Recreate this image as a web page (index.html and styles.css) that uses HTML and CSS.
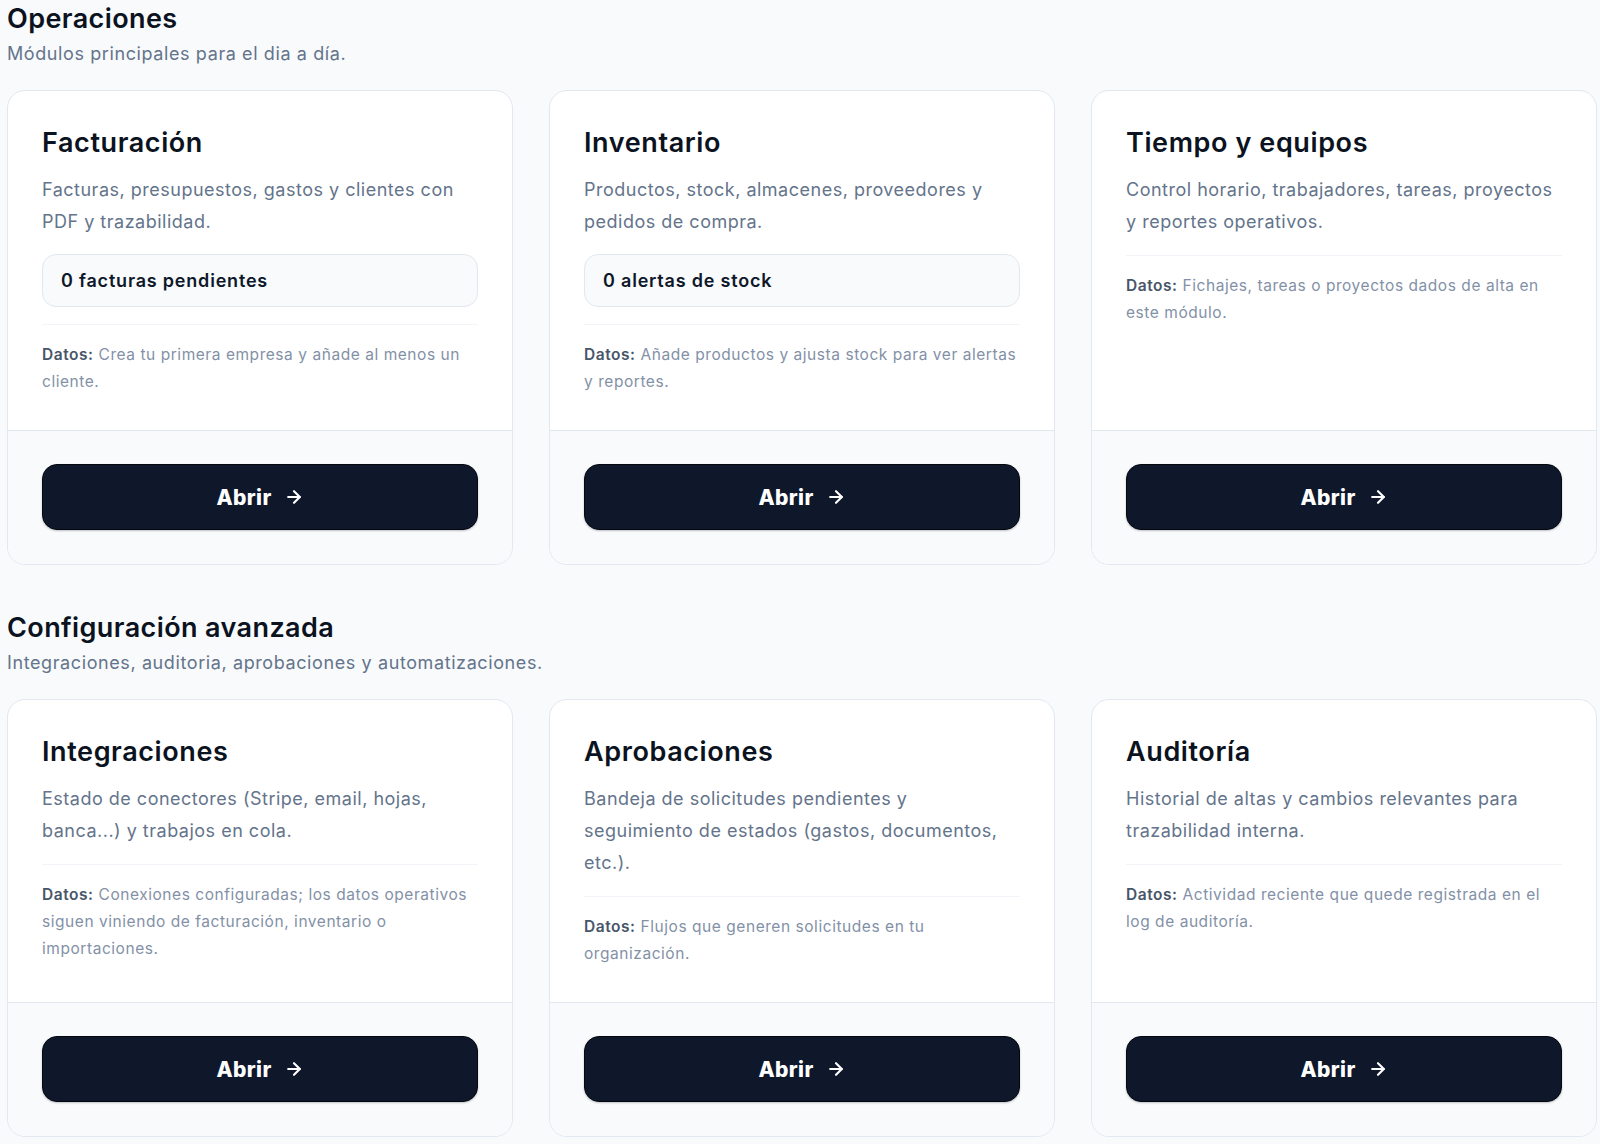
FILE: index.html
```html
<!DOCTYPE html>
<html lang="es">
<head>
<meta charset="utf-8">
<title>Módulos</title>
<link rel="stylesheet" href="styles.css">
</head>
<body>
<main class="page">
  <section class="section">
    <header class="section-head">
      <h2 class="section-title">Operaciones</h2>
      <p class="section-sub">Módulos principales para el dia a día.</p>
    </header>
    <div class="grid">
      <article class="card">
        <div class="card-body">
          <h3 class="card-title">Facturación</h3>
          <p class="card-desc">Facturas, presupuestos, gastos y clientes con PDF y trazabilidad.</p>
          <div class="stat">0 facturas pendientes</div>
          <p class="data"><strong>Datos:</strong> Crea tu primera empresa y añade al menos un cliente.</p>
        </div>
        <div class="card-foot">
          <button class="btn">Abrir <svg class="arrow" viewBox="0 0 24 24" fill="none" stroke="currentColor" stroke-width="2.6" stroke-linecap="round" stroke-linejoin="round"><path d="M5 12h14"/><path d="m12 5 7 7-7 7"/></svg></button>
        </div>
      </article>
      <article class="card">
        <div class="card-body">
          <h3 class="card-title">Inventario</h3>
          <p class="card-desc">Productos, stock, almacenes, proveedores y pedidos de compra.</p>
          <div class="stat">0 alertas de stock</div>
          <p class="data"><strong>Datos:</strong> Añade productos y ajusta stock para ver alertas y reportes.</p>
        </div>
        <div class="card-foot">
          <button class="btn">Abrir <svg class="arrow" viewBox="0 0 24 24" fill="none" stroke="currentColor" stroke-width="2.6" stroke-linecap="round" stroke-linejoin="round"><path d="M5 12h14"/><path d="m12 5 7 7-7 7"/></svg></button>
        </div>
      </article>
      <article class="card">
        <div class="card-body">
          <h3 class="card-title">Tiempo y equipos</h3>
          <p class="card-desc">Control horario, trabajadores, tareas, proyectos y reportes operativos.</p>
          <p class="data"><strong>Datos:</strong> Fichajes, tareas o proyectos dados de alta en este módulo.</p>
        </div>
        <div class="card-foot">
          <button class="btn">Abrir <svg class="arrow" viewBox="0 0 24 24" fill="none" stroke="currentColor" stroke-width="2.6" stroke-linecap="round" stroke-linejoin="round"><path d="M5 12h14"/><path d="m12 5 7 7-7 7"/></svg></button>
        </div>
      </article>
    </div>
  </section>

  <section class="section">
    <header class="section-head">
      <h2 class="section-title">Configuración avanzada</h2>
      <p class="section-sub">Integraciones, auditoria, aprobaciones y automatizaciones.</p>
    </header>
    <div class="grid">
      <article class="card">
        <div class="card-body">
          <h3 class="card-title">Integraciones</h3>
          <p class="card-desc">Estado de conectores (Stripe, email, hojas, banca...) y trabajos en cola.</p>
          <p class="data"><strong>Datos:</strong> Conexiones configuradas; los datos operativos siguen viniendo de facturación, inventario o importaciones.</p>
        </div>
        <div class="card-foot">
          <button class="btn">Abrir <svg class="arrow" viewBox="0 0 24 24" fill="none" stroke="currentColor" stroke-width="2.6" stroke-linecap="round" stroke-linejoin="round"><path d="M5 12h14"/><path d="m12 5 7 7-7 7"/></svg></button>
        </div>
      </article>
      <article class="card">
        <div class="card-body">
          <h3 class="card-title">Aprobaciones</h3>
          <p class="card-desc">Bandeja de solicitudes pendientes y seguimiento de estados (gastos, documentos, etc.).</p>
          <p class="data"><strong>Datos:</strong> Flujos que generen solicitudes en tu organización.</p>
        </div>
        <div class="card-foot">
          <button class="btn">Abrir <svg class="arrow" viewBox="0 0 24 24" fill="none" stroke="currentColor" stroke-width="2.6" stroke-linecap="round" stroke-linejoin="round"><path d="M5 12h14"/><path d="m12 5 7 7-7 7"/></svg></button>
        </div>
      </article>
      <article class="card">
        <div class="card-body">
          <h3 class="card-title">Auditoría</h3>
          <p class="card-desc">Historial de altas y cambios relevantes para trazabilidad interna.</p>
          <p class="data"><strong>Datos:</strong> Actividad reciente que quede registrada en el log de auditoría.</p>
        </div>
        <div class="card-foot">
          <button class="btn">Abrir <svg class="arrow" viewBox="0 0 24 24" fill="none" stroke="currentColor" stroke-width="2.6" stroke-linecap="round" stroke-linejoin="round"><path d="M5 12h14"/><path d="m12 5 7 7-7 7"/></svg></button>
        </div>
      </article>
    </div>
  </section>
</main>
</body>
</html>
```

FILE: styles.css
```css
* { box-sizing: border-box; }

html, body {
  margin: 0;
  padding: 0;
  background: #f8fafc;
}

body {
  font-family: Inter, "Noto Sans", "Liberation Sans", sans-serif;
  color: #0f172a;
}

.page {
  padding: 1px 3px 0 7px;
  display: flex;
  flex-direction: column;
  gap: 45px;
}

.section-head {
  display: flex;
  flex-direction: column;
  gap: 3px;
  margin-bottom: 22px;
}

.section-title {
  margin: 0;
  font-size: 27px;
  line-height: 36px;
  font-weight: 600;
  color: #0b1220;
  letter-spacing: 0.4px;
}

.section-sub {
  margin: 0;
  font-size: 18px;
  line-height: 28px;
  color: #64748b;
  letter-spacing: 0.6px;
}

.grid {
  display: grid;
  grid-template-columns: repeat(3, 1fr);
  gap: 36px;
}

.card {
  display: flex;
  flex-direction: column;
  background: #ffffff;
  border: 1px solid #e2e8f0;
  border-radius: 18px;
  overflow: hidden;
}

.card-body {
  flex: 1;
  padding: 34px 34px 35px;
  display: flex;
  flex-direction: column;
}

.card-title {
  margin: 0;
  font-size: 27px;
  line-height: 36px;
  font-weight: 600;
  color: #0b1220;
  letter-spacing: 0.6px;
}

.card-desc {
  margin: 13px 0 0;
  font-size: 18px;
  line-height: 32px;
  color: #64748b;
  letter-spacing: 0.5px;
}

.stat {
  margin-top: 16px;
  padding: 12px 18px;
  border: 1px solid #e2e8f0;
  border-radius: 14px;
  background: #f8fafc;
  font-size: 18px;
  line-height: 27px;
  font-weight: 600;
  color: #0f172a;
  letter-spacing: 0.8px;
}

.data {
  margin: 17px 0 0;
  padding-top: 16px;
  border-top: 1px solid #f1f5f9;
  font-size: 15.5px;
  line-height: 27px;
  color: #8391a7;
  letter-spacing: 0.55px;
}

.data strong {
  font-weight: 600;
  color: #475569;
}

.card-foot {
  border-top: 1px solid #e2e8f0;
  background: #f8fafc;
  padding: 33px 34px 34px;
}

.btn {
  width: 100%;
  height: 66px;
  display: flex;
  align-items: center;
  justify-content: center;
  gap: 12px;
  border: 1px solid #05080f;
  border-radius: 15px;
  background: #0f172a;
  color: #ffffff;
  font-family: Inter, "Noto Sans", "Liberation Sans", sans-serif;
  font-size: 21px;
  font-weight: 800;
  letter-spacing: 0.4px;
  box-shadow: 0 1px 2px rgba(15, 23, 42, 0.25);
  cursor: pointer;
}

.arrow {
  width: 20px;
  height: 20px;
  display: block;
}
```
